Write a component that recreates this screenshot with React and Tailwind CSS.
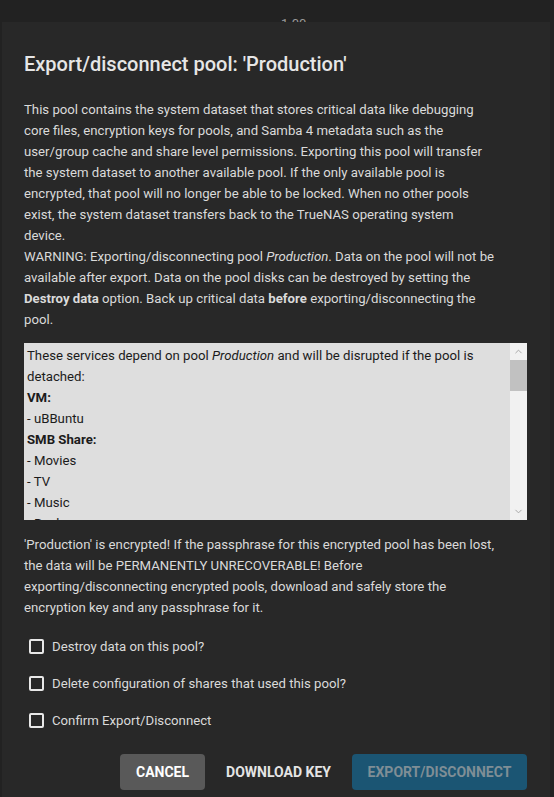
import { ChevronUp, ChevronDown } from 'lucide-react';

const services = [
  { kind: 'head', text: 'VM:' },
  { kind: 'item', text: '- uBBuntu' },
  { kind: 'head', text: 'SMB Share:' },
  { kind: 'item', text: '- Movies' },
  { kind: 'item', text: '- TV' },
  { kind: 'item', text: '- Music' },
  { kind: 'item', text: '- Backups' },
];

const options = [
  'Destroy data on this pool?',
  'Delete configuration of shares that used this pool?',
  'Confirm Export/Disconnect',
];

function ServicesBox() {
  return (
    <div className="mt-[13px] flex h-[177px] bg-[#dedede] text-[#1b1b1b]">
      <div className="flex-1 overflow-hidden px-[3px] pt-[2px]">
        <p>
          These services depend on pool <i>Production</i> and will be disrupted if the pool is
          detached:
        </p>
        {services.map((s, i) => (
          <p key={i} className={s.kind === 'head' ? 'font-bold' : ''}>
            {s.text}
          </p>
        ))}
      </div>
      <div className="flex w-[17px] flex-col bg-[#f1f1f1]">
        <div className="flex h-[17px] items-center justify-center text-[#a3a3a3]">
          <ChevronUp size={11} strokeWidth={2} />
        </div>
        <div className="h-[31px] bg-[#c1c1c1]" />
        <div className="flex-1" />
        <div className="flex h-[17px] items-center justify-center text-[#a3a3a3]">
          <ChevronDown size={11} strokeWidth={2} />
        </div>
      </div>
    </div>
  );
}

export default function App() {
  return (
    <div
      className="h-[797px] overflow-hidden bg-[#222222]"
      style={{ fontFamily: 'Roboto, "Liberation Sans", sans-serif' }}
    >
      <div className="h-[22px] overflow-hidden pl-[281px]">
        <span className="relative top-[11px] text-[13px] text-[#9a9a9a]">1.00</span>
      </div>
      <div className="ml-[2px] mr-[4px] h-[775px] bg-[#282828] pl-[22px] pr-[23px] pt-[26px] text-[13.2px] leading-[21px] text-[#dadada]">
        <h2 className="mb-[19px] text-[20px] leading-[32px] font-medium text-[#e6e6e6]">
          Export/disconnect pool: 'Production'
        </h2>

        <div className="w-[472px]">
          <p>
            This pool contains the system dataset that stores critical data like debugging core
            files, encryption keys for pools, and Samba 4 metadata such as the user/group cache and
            share level permissions. Exporting this pool will transfer the system dataset to
            another available pool. If the only available pool is encrypted, that pool will no
            longer be able to be locked. When no other pools exist, the system dataset transfers
            back to the TrueNAS operating system device.
          </p>
          <p>
            WARNING: Exporting/disconnecting pool <i>Production</i>. Data on the pool will not be
            available after export. Data on the pool disks can be destroyed by setting the{' '}
            <b>Destroy data</b> option. Back up critical data <b>before</b>{' '}
            exporting/disconnecting the pool.
          </p>
        </div>

        <ServicesBox />

        <p className="mt-[14px] w-[472px]">
          'Production' is encrypted! If the passphrase for this encrypted pool has been lost, the
          data will be PERMANENTLY UNRECOVERABLE! Before exporting/disconnecting encrypted pools,
          download and safely store the encryption key and any passphrase for it.
        </p>

        <div className="mt-[18px] flex flex-col gap-[16px] pl-[5px]">
          {options.map((label) => (
            <label key={label} className="flex h-[21px] items-center gap-[8px]">
              <span className="h-[15px] w-[15px] rounded-[2px] border-2 border-[#e8e8e8]" />
              <span>{label}</span>
            </label>
          ))}
        </div>

        <div className="mt-[23px] flex items-center justify-end gap-[8px] text-[14px] font-medium">
          <button className="h-[36px] rounded-[4px] bg-[#595959] px-[16px] font-bold text-white">
            CANCEL
          </button>
          <button className="h-[36px] px-[13px] font-bold text-[#e4e4e4]">DOWNLOAD KEY</button>
          <button className="h-[36px] w-[175px] rounded-[4px] bg-[#1b5573] font-bold text-[#7f8e96]">
            EXPORT/DISCONNECT
          </button>
        </div>
      </div>
    </div>
  );
}
